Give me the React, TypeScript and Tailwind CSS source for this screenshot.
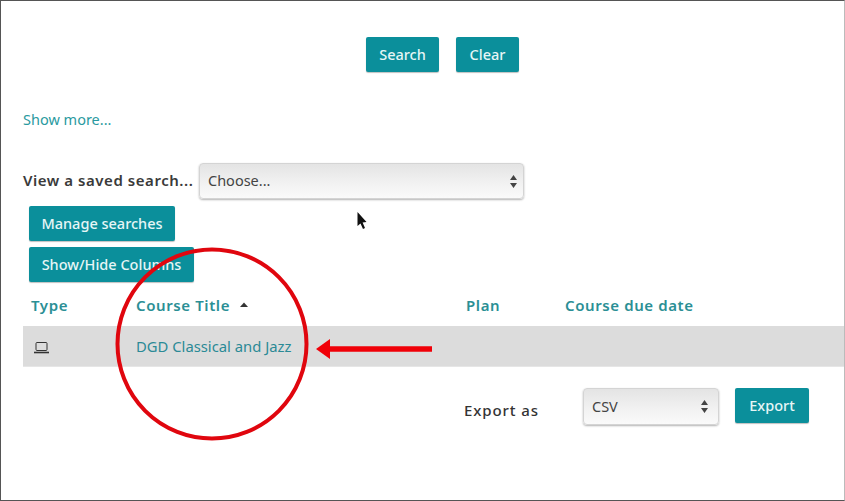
import React from "react";

const btn = "h-[35px] flex items-center justify-center rounded-[2px] bg-[#0b8f9b] text-[#e6f6f6] text-[14.5px] font-medium shadow-[0_1px_1px_rgba(0,0,0,0.25)]";
const sel = "relative flex items-center rounded-[4px] border border-[#d4d4d4] bg-gradient-to-b from-[#e4e4e4] via-[#f0f0f0] to-[#fafafa] text-[#444] text-[14.5px] shadow-[0_1px_2px_rgba(0,0,0,0.3)]";

function Updown() {
  return (
    <svg width="9" height="15" viewBox="0 0 9 15" className="shrink-0">
      <path d="M4.5 1 L8 6 L1 6 Z M4.5 14 L8 9 L1 9 Z" fill="#444" />
    </svg>
  );
}

export default function App() {
  return (
    <div className="relative w-[845px] h-[501px] overflow-hidden bg-white border border-[#555] border-r-[#bbb] font-['Noto_Sans',sans-serif]">
      <div className="flex justify-start gap-[17px] pl-[365px] pt-[36px]">
        <div className={`${btn} w-[73px]`}>Search</div>
        <div className={`${btn} w-[63px]`}>Clear</div>
      </div>

      <div className="pl-[22px] pt-[36px] text-[14.5px] leading-[22px] text-[#2a9aa0]">Show more...</div>

      <div className="flex items-center pl-[22px] pt-[33px]">
        <div className="w-[176px] -mt-[2px] text-[15px] font-semibold text-[#3a3a3a] tracking-[0.55px] whitespace-nowrap">View a saved search...</div>
        <div className={`${sel} w-[325px] h-[36px] pl-[8px] pr-[5px] justify-between`}>
          <span>Choose...</span>
          <Updown />
        </div>
      </div>

      <div className="flex flex-col items-start gap-[6px] pl-[28px] pt-[7px]">
        <div className={`${btn} w-[146px]`}>Manage searches</div>
        <div className={`${btn} w-[165px]`}>Show/Hide Columns</div>
      </div>

      <div className="grid grid-cols-[113px_330px_99px_1fr] pl-[22px] pt-[12px]">
        <div className="pl-[8px] h-[22px] leading-[22px] text-[15px] font-semibold tracking-[0.6px] text-[#2b8f95]">Type</div>
        <div className="flex items-center gap-[9px] h-[22px] text-[15px] font-semibold tracking-[0.6px] text-[#2b8f95]">
          Course Title
          <svg width="10" height="6" viewBox="0 0 10 6"><path d="M5 0.5 L9 5 L1 5 Z" fill="#333" /></svg>
        </div>
        <div className="h-[22px] leading-[22px] text-[15px] font-semibold tracking-[0.6px] text-[#2b8f95]">Plan</div>
        <div className="h-[22px] leading-[22px] text-[15px] font-semibold tracking-[0.6px] text-[#2b8f95] whitespace-nowrap">Course due date</div>
      </div>

      <div className="ml-[22px] mt-[10px] h-[41px] bg-[#dcdcdc] border-b border-[#e6e6e6] grid grid-cols-[113px_1fr] items-center">
        <div className="pl-[10px] pt-[2px]">
          <svg width="17" height="13" viewBox="0 0 17 13" fill="none" stroke="#333" strokeWidth="1">
            <rect x="3" y="1.5" width="11" height="8" rx="1" />
            <path d="M1 11.5 H16" strokeWidth="1.6" />
          </svg>
        </div>
        <div className="text-[14.8px] text-[#2b8a96]">DGD Classical and Jazz</div>
      </div>

      <div className="flex items-start pl-[463px] pt-[21px]">
        <div className="w-[119px] pt-[11px] text-[15px] font-medium tracking-[0.9px] text-[#333]">Export as</div>
        <div className={`${sel} w-[136px] h-[37px] pl-[8px] pr-[9px] justify-between`}>
          <span>CSV</span>
          <Updown />
        </div>
        <div className={`${btn} w-[74px] ml-[16px]`}>Export</div>
      </div>

      {/* annotations over the content */}
      <svg className="absolute left-0 top-0" width="845" height="501" viewBox="1 1 845 501" fill="none">
        <ellipse cx="212" cy="344" rx="94.5" ry="94.5" stroke="#e0060e" strokeWidth="4" />
        <path d="M327 349 H432" stroke="#f00008" strokeWidth="5.5" />
        <path d="M316 349 L330 339 V359 Z" fill="#f00008" />
        <path d="M357.5 212 V226 L360.5 223.5 L363 229 L365 228 L362.6 222.6 L366.5 222 Z" fill="#111" />
      </svg>
    </div>
  );
}
